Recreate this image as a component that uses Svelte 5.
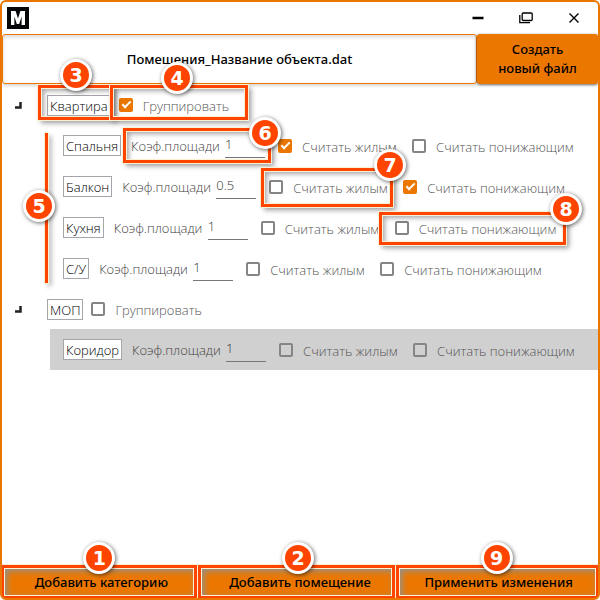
<script>
    let categories = [
        {
            id: 1, name: 'Квартира', grouped: true,
            rooms: [
                { id: 11, name: 'Спальня', coef: '1', living: true, lowering: false },
                { id: 12, name: 'Балкон', coef: '0.5', living: false, lowering: true },
                { id: 13, name: 'Кухня', coef: '1', living: false, lowering: false },
                { id: 14, name: 'С/У', coef: '1', living: false, lowering: false }
            ]
        },
        {
            id: 2, name: 'МОП', grouped: false,
            rooms: [
                { id: 21, name: 'Коридор', coef: '1', living: false, lowering: false, selected: true }
            ]
        }
    ];

    // frames over the tree, bx/by is the place of the numbered circle
    const frames = [
        { n: 3, x: 38, y: 85, w: 75, h: 35, bx: 76, by: 75 },
        { n: 4, x: 110, y: 85, w: 138, h: 35, bx: 177, by: 78 },
        { n: 5, x: 45, y: 133, w: 3, h: 150, bx: 39, by: 206, line: true },
        { n: 6, x: 123, y: 128, w: 148, h: 35, bx: 265, by: 133 },
        { n: 7, x: 261, y: 168, w: 132, h: 39, bx: 390, by: 165 },
        { n: 8, x: 379, y: 212, w: 187, h: 33, bx: 566, by: 209 }
    ];

    const actions = [
        { n: 1, text: 'Добавить категорию' },
        { n: 2, text: 'Добавить помещение' },
        { n: 9, text: 'Применить изменения' }
    ];
</script>

<div class="window">
    <div class="titlebar">
        <svg class="logo" width="22" height="22" viewBox="0 0 22 22">
            <rect width="22" height="22" fill="#050709" />
            <path d="M4 18V4h4.600l2.400 7.500L13.400 4H18v14h-3.400V9.500L12.200 17H9.800L7.400 9.500V18z" fill="#fff" />
        </svg>
        <div class="controls">
            <button aria-label="Свернуть">
                <svg width="14" height="14" viewBox="0 0 14 14"><path d="M1.500 7h11" stroke="#000" stroke-width="2.500" /></svg>
            </button>
            <button aria-label="Развернуть">
                <svg width="14" height="14" viewBox="0 0 14 14" fill="none" stroke="#000" stroke-width="1.300">
                    <rect x="3.200" y="2" width="10" height="7.500" rx="1" />
                    <path d="M.8 4v7.600h10.200" />
                </svg>
            </button>
            <button aria-label="Закрыть">
                <svg width="14" height="14" viewBox="0 0 14 14"><path d="M2.500 2.500l9 9M11.500 2.500l-9 9" stroke="#000" stroke-width="1.400" /></svg>
            </button>
        </div>
    </div>

    <header>
        <div class="file-name">Помещения_Название объекта.dat</div>
        <button class="create">Создать<br />новый файл</button>
    </header>

    <main>
        {#each categories as category (category.id)}
            <div class="category">
                <button class="toggle" aria-label="Свернуть категорию">
                    <svg width="7" height="7" viewBox="0 0 7 7"><path d="M5.500 0v5.500H0" fill="none" stroke="#222" stroke-width="2.500" /></svg>
                </button>
                <span class="name">{category.name}</span>
                <label class="check">
                    <input type="checkbox" bind:checked={category.grouped} />
                    <span>Группировать</span>
                </label>
            </div>
            {#each category.rooms as room (room.id)}
                <div class="room" class:selected={room.selected}>
                    <span class="name">{room.name}</span>
                    <label class="coef">
                        <span>Коэф.площади</span>
                        <input type="text" bind:value={room.coef} />
                    </label>
                    <label class="check living">
                        <input type="checkbox" bind:checked={room.living} />
                        <span>Считать жилым</span>
                    </label>
                    <label class="check">
                        <input type="checkbox" bind:checked={room.lowering} />
                        <span>Считать понижающим</span>
                    </label>
                </div>
            {/each}
        {/each}
    </main>

    <footer>
        {#each actions as action (action.n)}
            <div class="action">
                <button>{action.text}</button>
                <div class="frame"></div>
                <span class="badge">{action.n}</span>
            </div>
        {/each}
    </footer>

    {#each frames as f (f.n)}
        <div class="frame" class:line={f.line} style="left:{f.x}px; top:{f.y}px; width:{f.w}px; height:{f.h}px"></div>
    {/each}
    {#each frames as f (f.n)}
        <span class="badge" style="left:{f.bx}px; top:{f.by}px">{f.n}</span>
    {/each}
</div>

<style>
    :global(body) {
        background: #fff;
    }

    .window {
        position: relative;
        display: flex;
        flex-direction: column;
        box-sizing: border-box;
        min-height: 100vh;
        border: 2px solid #eb7700;
        border-radius: 6px;
        overflow: hidden;
        font-family: "Open Sans", "Noto Sans", sans-serif;
        font-size: 13px;
        line-height: 18px;
        color: #000;
    }

    button {
        font: inherit;
        color: inherit;
        border: none;
        background: none;
        padding: 0;
        cursor: pointer;
    }

    .titlebar {
        display: flex;
        align-items: center;
        justify-content: space-between;
        height: 32px;
        padding: 0 17px 0 5px;
    }

    .controls {
        display: flex;
        gap: 34px;
    }

    .controls svg,
    .toggle svg {
        display: block;
    }

    header {
        display: flex;
        height: 50px;
    }

    .file-name,
    .create,
    .action button {
        font-family: "Noto Sans", "Open Sans", sans-serif;
        font-weight: 500;
    }

    .file-name {
        flex: 1;
        display: flex;
        align-items: center;
        justify-content: center;
        border: 1px solid #eb7700;
        border-radius: 3px;
        box-shadow: inset 0 2px 4px rgba(0, 0, 0, 0.15), 0 2px 3px rgba(0, 0, 0, 0.15);
    }

    .create {
        width: 121px;
        background: #eb7700;
        border-radius: 3px;
        box-shadow: 0 1px 3px rgba(0, 0, 0, 0.6);
        line-height: 19px;
    }

    main {
        flex: 1;
        padding-top: 1px;
        font-weight: 300;
    }

    .category {
        display: flex;
        align-items: center;
        height: 40px;
        padding-left: 12px;
    }

    .toggle {
        width: 33px;
    }

    .toggle svg {
        margin-left: 1px;
    }

    .name {
        box-sizing: border-box;
        height: 21px;
        padding: 0 2px;
        border: 1px solid #a5a5ab;
        background: #fff;
        line-height: 20px;
    }

    .category .check {
        margin-left: 8px;
    }

    .room {
        display: flex;
        align-items: center;
        height: 41px;
        margin-left: 48px;
        padding-left: 13px;
    }

    .selected {
        background: #d0d0d0;
    }

    .coef {
        display: flex;
        align-items: center;
        margin: 0 13px 0 10px;
        color: #444;
    }

    .coef span {
        width: 94px;
    }

    .coef input {
        box-sizing: border-box;
        width: 40px;
        height: 24px;
        padding: 0 0 2px;
        border: none;
        border-bottom: 1px solid #777;
        background: none;
        font: inherit;
        color: #333;
    }

    .check {
        display: flex;
        align-items: center;
        gap: 10px;
        color: #555;
        white-space: nowrap;
    }

    .living {
        width: 134px;
    }

    .check input {
        appearance: none;
        box-sizing: border-box;
        position: relative;
        width: 14px;
        height: 14px;
        margin: 0;
        border: 2px solid #858585;
        border-radius: 2px;
    }

    .check input:checked {
        border-color: #eb7700;
        background: #eb7700;
    }

    .check input:checked::after {
        content: "";
        position: absolute;
        left: 3px;
        top: -1px;
        width: 3px;
        height: 7px;
        border: solid #fff;
        border-width: 0 2px 2px 0;
        transform: rotate(45deg);
    }

    .check span {
        padding-top: 2px;
    }

    footer {
        display: flex;
    }

    .action {
        position: relative;
        flex: 1;
        display: flex;
        height: 33px;
    }

    .action button {
        flex: 1;
        background: #eb7700;
    }

    .frame {
        position: absolute;
        box-sizing: border-box;
        border: 3px solid #ff4400;
        outline: 1px solid #f8f2d4;
        box-shadow: 3px 3px 5px rgba(0, 0, 0, 0.4), inset 0 0 0 1px #f8f2d4, inset 3px 3px 5px rgba(0, 0, 0, 0.35);
        pointer-events: none;
        margin: -2px 0 0 -2px;
    }

    .line {
        border-width: 0;
        background: #ff4400;
        box-shadow: 3px 3px 5px rgba(0, 0, 0, 0.4);
    }

    .action .frame {
        inset: 0 4px -1px -3px;
        margin: 0;
        box-shadow: inset 0 0 0 1px #f8f2d4, inset 2px 2px 6px 1px #8f9290;
    }

    .action:first-child .frame {
        left: -1px;
    }

    .action:last-child .frame {
        right: -1px;
    }

    .badge {
        position: absolute;
        box-sizing: border-box;
        width: 32px;
        height: 32px;
        margin: -18px 0 0 -18px;
        border: 3px solid #fff;
        border-radius: 50%;
        background: #ff4400;
        box-shadow: 1px 1px 4px rgba(0, 0, 0, 0.6);
        color: #fff;
        font: bold 19px/26px "DejaVu Sans", sans-serif;
        text-align: center;
    }

    .action .badge {
        left: 50%;
        top: -7px;
        margin: -16px 0 0 -18px;
    }
</style>
